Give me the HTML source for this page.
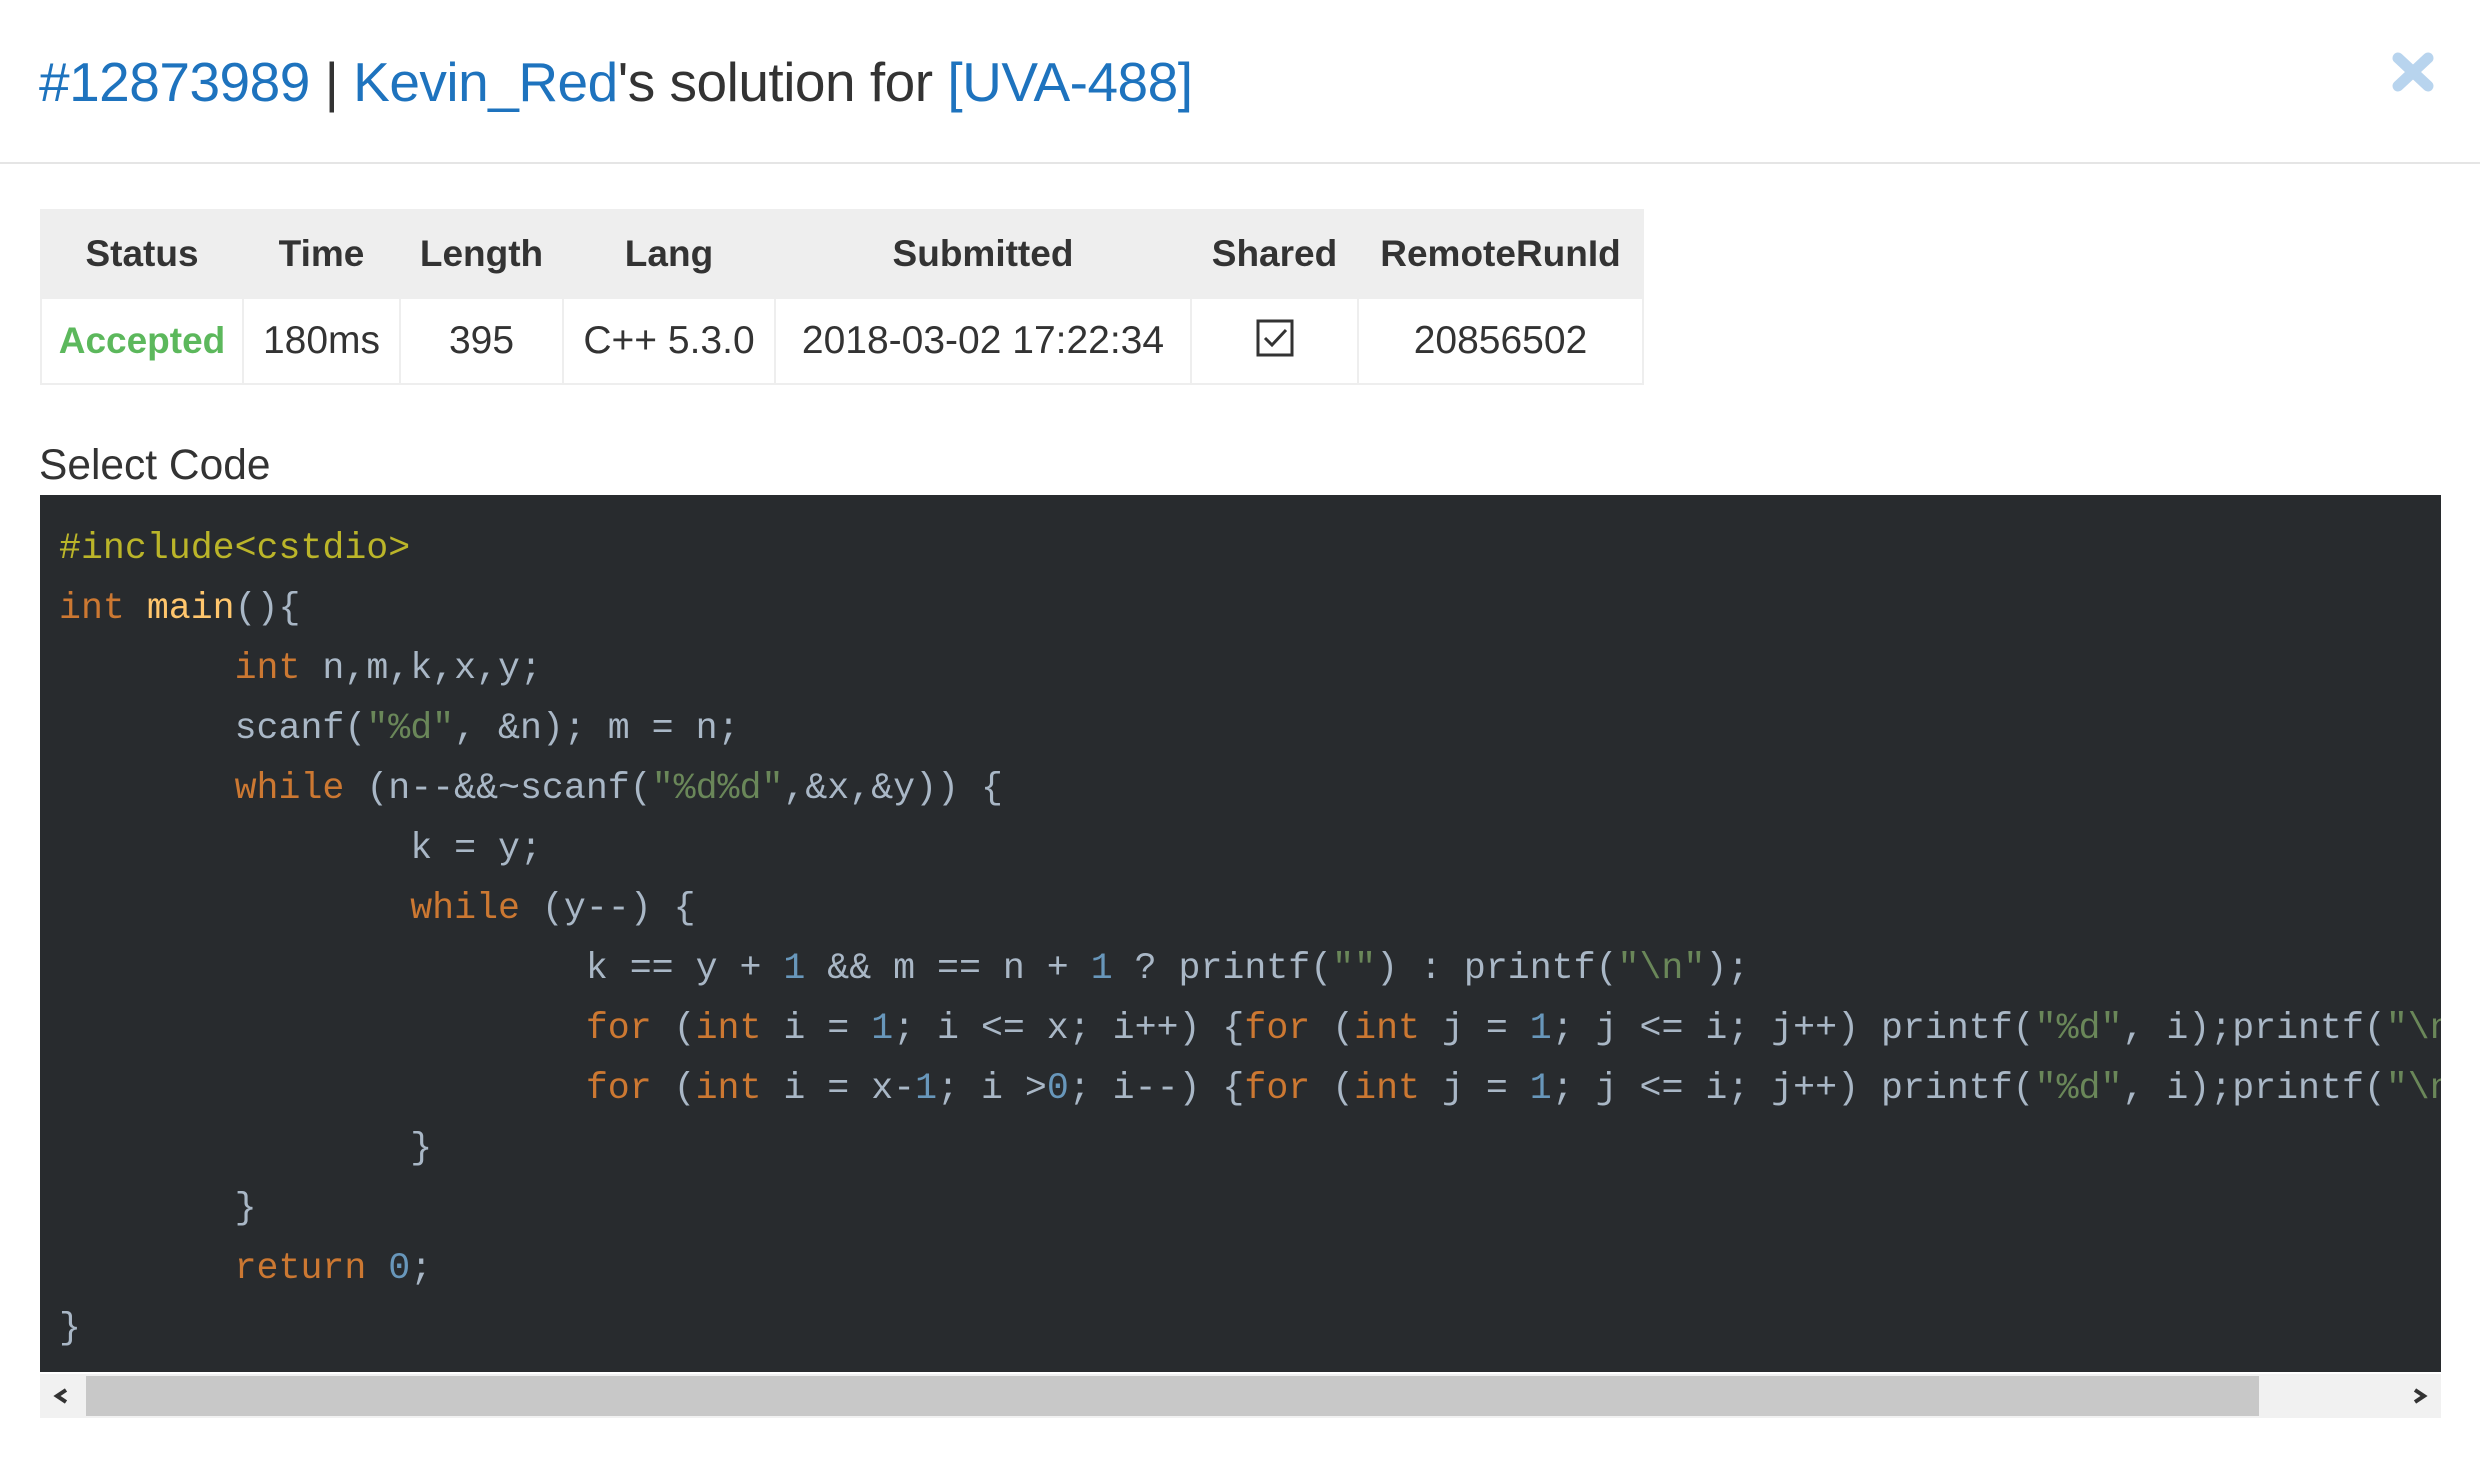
<!DOCTYPE html>
<html><head><meta charset="utf-8">
<style>
html,body{margin:0;padding:0;background:#fff;width:2480px;height:1481px;overflow:hidden;font-family:"Liberation Sans",sans-serif;color:#333}
.title{position:absolute;left:39px;top:42px;font-size:55px;line-height:80px;white-space:nowrap;letter-spacing:-0.5px}
.title a{color:#1e73be;text-decoration:none}
.close{position:absolute;left:2390px;top:50px;width:46px;height:44px}
.hr{position:absolute;left:0;top:162px;width:2480px;height:2px;background:#e5e5e5}
table{position:absolute;left:40px;top:209px;border-collapse:collapse;font-size:39px}
td,th{border:2px solid #eee;text-align:center;padding:0;white-space:nowrap}
th{background:#eee;height:86px;font-weight:bold;color:#333;font-size:37px}
td{height:84px;background:#fff}
.acc{color:#5cb85c;font-weight:bold;font-size:37px}
.sel{position:absolute;left:39px;top:440px;font-size:42.5px;line-height:52px;color:#333}
.code{position:absolute;left:40px;top:495px;width:2401px;height:877px;background:#282b2e;overflow:hidden}
pre{margin:0;padding:24px 0 0 19px;font-family:"Liberation Mono","DejaVu Sans Mono",monospace;font-size:36.6px;line-height:60px;color:#a9b7c6;tab-size:8;-moz-tab-size:8;white-space:pre}
.k{color:#cc7832}.f{color:#ffc66d}.s{color:#6a8759}.n{color:#6897bb}.p{color:#bbb529}
.sb{position:absolute;left:40px;top:1374px;width:2401px;height:44px;background:#f1f1f1}
.th{position:absolute;left:46px;top:2px;width:2173px;height:40px;background:#c8c8c8}
.ar{position:absolute;top:14px}
</style></head><body>
<div class="title"><a>#12873989</a> | <a>Kevin_Red</a>'s solution for <a>[UVA-488]</a></div>
<svg class="close" viewBox="0 0 46 44"><path d="M8 8L38 36M38 8L8 36" stroke="#b8d4ee" stroke-width="11" stroke-linecap="round"/></svg>
<div class="hr"></div>
<table>
<tr><th style="width:200px">Status</th><th style="width:155px">Time</th><th style="width:161px">Length</th><th style="width:210px">Lang</th><th style="width:414px">Submitted</th><th style="width:165px">Shared</th><th style="width:283px">RemoteRunId</th></tr>
<tr><td class="acc">Accepted</td><td>180ms</td><td>395</td><td>C++ 5.3.0</td><td>2018-03-02 17:22:34</td><td><svg width="38" height="38" viewBox="0 0 38 38" style="vertical-align:middle;margin-top:-10px"><rect x="2" y="2" width="34" height="34" fill="none" stroke="#333" stroke-width="3"/><path d="M9 19L16 26L30 11" fill="none" stroke="#333" stroke-width="3"/></svg></td><td>20856502</td></tr>
</table>
<div class="sel">Select Code</div>
<div class="code"><pre><span class="p">#include&lt;cstdio&gt;</span>
<span class="k">int</span> <span class="f">main</span>(){
	<span class="k">int</span> n,m,k,x,y;
	scanf(<span class="s">"%d"</span>, &amp;n); m = n;
	<span class="k">while</span> (n--&amp;&amp;~scanf(<span class="s">"%d%d"</span>,&amp;x,&amp;y)) {
		k = y;
		<span class="k">while</span> (y--) {
			k == y + <span class="n">1</span> &amp;&amp; m == n + <span class="n">1</span> ? printf(<span class="s">""</span>) : printf(<span class="s">"\n"</span>);
			<span class="k">for</span> (<span class="k">int</span> i = <span class="n">1</span>; i &lt;= x; i++) {<span class="k">for</span> (<span class="k">int</span> j = <span class="n">1</span>; j &lt;= i; j++) printf(<span class="s">"%d"</span>, i);printf(<span class="s">"\n"</span>);}
			<span class="k">for</span> (<span class="k">int</span> i = x-<span class="n">1</span>; i &gt;<span class="n">0</span>; i--) {<span class="k">for</span> (<span class="k">int</span> j = <span class="n">1</span>; j &lt;= i; j++) printf(<span class="s">"%d"</span>, i);printf(<span class="s">"\n"</span>);}
		}
	}
	<span class="k">return</span> <span class="n">0</span>;
}</pre></div>
<div class="sb"><div class="th"></div>
<svg class="ar" style="left:12px" width="18" height="16" viewBox="0 0 18 16"><path d="M14 2L5 8L14 14" fill="none" stroke="#333" stroke-width="4"/></svg>
<svg class="ar" style="right:12px" width="18" height="16" viewBox="0 0 18 16"><path d="M4 2L13 8L4 14" fill="none" stroke="#333" stroke-width="4"/></svg>
</div>
</body></html>
